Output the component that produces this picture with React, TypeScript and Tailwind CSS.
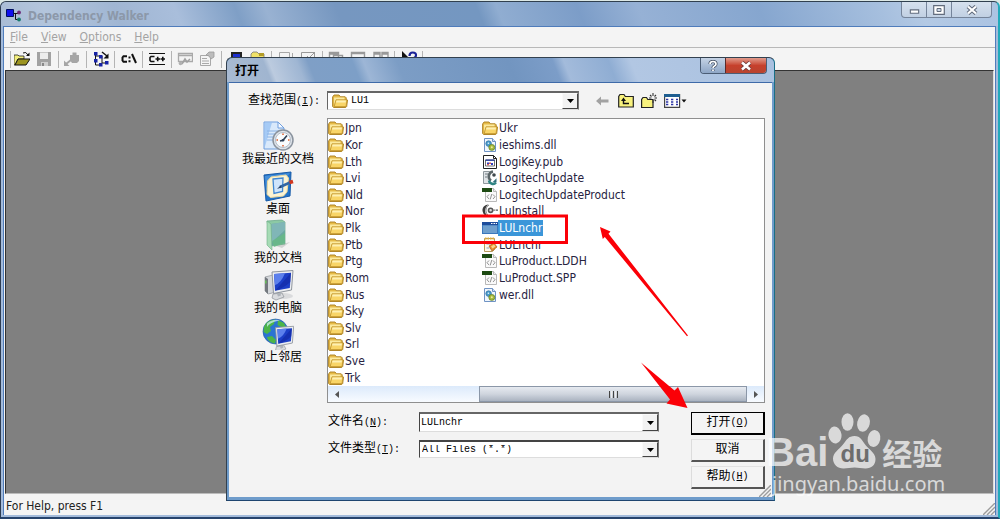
import type { ReactNode } from "react";
import clsx from "clsx";

type IconProps = { className?: string };

const folders = [
  "Jpn", "Kor", "Lth", "Lvi", "Nld", "Nor", "Plk", "Ptb",
  "Ptg", "Rom", "Rus", "Sky", "Slv", "Srl", "Sve", "Trk", "Ukr",
];

const files = [
  { name: "ieshims.dll", icon: DllIcon },
  { name: "LogiKey.pub", icon: PubIcon },
  { name: "LogitechUpdate", icon: UpdateIcon },
  { name: "LogitechUpdateProduct", icon: CodeIcon },
  { name: "LuInstall", icon: InstallIcon },
  { name: "LULnchr", icon: AppIcon, selected: true },
  { name: "LULnchr", icon: ScriptIcon },
  { name: "LuProduct.LDDH", icon: CodeIcon },
  { name: "LuProduct.SPP", icon: CodeIcon },
  { name: "wer.dll", icon: DllIcon },
];

const places = [
  { name: "我最近的文档", icon: RecentIcon },
  { name: "桌面", icon: DesktopIcon },
  { name: "我的文档", icon: DocumentsIcon },
  { name: "我的电脑", icon: ComputerIcon },
  { name: "网上邻居", icon: NetworkIcon },
];

const menus = ["File", "View", "Options", "Help"];

const tahoma = "font-['DejaVu_Sans_Condensed','Noto_Sans',sans-serif]";
const song = "font-['Liberation_Mono','Noto_Sans_CJK_SC',monospace]";

/* ---------- file icons ---------- */

function FolderIcon({ className }: IconProps) {
  return (
    <svg viewBox="0 0 16 16" className={clsx("size-4 shrink-0", className)}>
      <path d="M.6 4 2 2h5l1.500 1.800h4.700l1 1V7h1.300l-.8 6.500-1 1H1.600l-1-1z" fill="#e6bb48" stroke="#a97d1d" strokeWidth=".9" />
      <path d="M2 4.500h10.500v2.300H4L2.200 12z" fill="#fbeaa0" />
      <path d="M4 6.800h11l-1 6.800H2.200z" fill="#f9d567" stroke="#b98c28" strokeWidth=".7" />
      <path d="M4.600 7.600h9.300l-.3 1.800H4z" fill="#fdf0b4" />
    </svg>
  );
}

function DllIcon() {
  return (
    <svg viewBox="0 0 16 16" className="size-4 shrink-0">
      <path d="M2.500 1.500h8l3 3v10h-11z" fill="#f0f6fd" stroke="#6f93c4" />
      <path d="M10.500 1.500v3h3" fill="#cfe0f3" stroke="#6f93c4" />
      <circle cx="6.600" cy="6.600" r="2.800" fill="#4a9ccb" stroke="#2f6f9d" strokeWidth=".7" />
      <circle cx="6.400" cy="6.300" r=".8" fill="#e9f5fb" />
      <circle cx="9.800" cy="10.400" r="3" fill="#a4b93b" stroke="#5c7d28" strokeWidth=".7" />
      <circle cx="9.800" cy="10.200" r="1" fill="#f0e99b" />
    </svg>
  );
}

function PubIcon() {
  return (
    <svg viewBox="0 0 16 16" className="size-4 shrink-0">
      <path d="M1.500 1.500h10l3 3v10h-13z" fill="#fff" stroke="#222" />
      <path d="M11.500 1.500v3h3" fill="none" stroke="#222" />
      <path d="M3.500 6h9v6h-9z" fill="#fff" stroke="#333" strokeWidth=".7" />
      <path d="M3.500 5.500h9v1.400h-9z" fill="#2b3f9c" />
      <path d="M5 8.500h2V10H5zM9 9h2v2H9z" fill="#2f3fc0" />
      <path d="M7.200 8.500h1.600V10H7.200zM5 10.300h2v1H5z" fill="#c6312e" />
    </svg>
  );
}

function UpdateIcon() {
  return (
    <svg viewBox="0 0 16 16" className="size-4 shrink-0">
      <path d="M1.500 1.500h6v12h-6z" fill="#dfe3e6" stroke="#8f989d" />
      <path d="M11 1.500A5 5 0 0 0 9 10.600" fill="none" stroke="#5c6669" strokeWidth="2.600" />
      <path d="M7 10.500a4 4 0 0 0 7 2" fill="none" stroke="#2f8583" strokeWidth="2.400" />
      <path d="M14.500 8.200v4h-4z" fill="#2f6f7b" />
      <circle cx="12" cy="5" r="1.800" fill="#3f484c" />
      <path d="M3 4h3M3 7h2" stroke="#707a80" />
    </svg>
  );
}

function CodeIcon() {
  return (
    <svg viewBox="0 0 16 16" className="size-4 shrink-0">
      <path d="M3.500 1.500h8l3 3v10h-11z" fill="#fafafa" stroke="#b9b9b9" />
      <path d="M11.500 1.500v3h3" fill="#eee" stroke="#b9b9b9" />
      <path d="M0 1h10v4H0z" fill="#1d4a12" />
      <path d="M7 7.500 5 9.700 7 12M11 7.500l2 2.200-2 2.300M9.800 7l-1.600 5.400" fill="none" stroke="#888" strokeWidth=".9" />
    </svg>
  );
}

function InstallIcon() {
  return (
    <svg viewBox="0 0 16 16" className="size-4 shrink-0">
      <path d="M6.500 1.500C2 1.800 0 5 .6 8.300c.6 3.600 3.400 5.500 6.400 5.200C3.800 12 3 9.800 3.200 7.500 3.400 5 4.500 2.800 6.500 1.500z" fill="#3c3c3c" />
      <path d="M7 2C4.500 3.500 4 5.500 4 7.500s1 4.200 3 5.500" fill="none" stroke="#888" />
      <circle cx="8.600" cy="7.300" r="2.100" fill="#ddd" stroke="#555" strokeWidth="1.600" />
      <path d="M11.500 7.200h1.300M13.600 7.200H16" stroke="#555" strokeWidth="1.300" />
    </svg>
  );
}

function AppIcon() {
  return (
    <svg viewBox="0 0 16 16" className="size-4 shrink-0">
      <path d="M0 2h16v12H0z" fill="#3b78bd" />
      <path d="M0 2h16v3H0z" fill="#1d4c9b" />
      <path d="M9 3h1.500v1H9zM11.500 3H13v1h-1.500zM13.800 3h1.200v1h-1.200z" fill="#fff" />
      <path d="M1 5.500h14V13H1z" fill="#6f9fcd" />
    </svg>
  );
}

function ScriptIcon() {
  return (
    <svg viewBox="0 0 16 16" className="size-4 shrink-0">
      <path d="M2.500 1.500h10v11l-2 2h-8z" fill="#fdf8e8" stroke="#b69a5c" />
      <path d="M3 1.500h9" stroke="#e0ad3c" strokeWidth="2" strokeDasharray="1.500 1" />
      <path d="M4.500 5h6M4.500 7h4M4.500 11h3" stroke="#8aa5c5" />
      <path d="m7 9 5-3 3 4-5 4z" fill="#e78e30" stroke="#a95f19" strokeWidth=".7" />
      <path d="m9 9.500 3-2 1.500 2-3 2z" fill="#f9d58c" />
    </svg>
  );
}

/* ---------- places bar icons ---------- */

function Monitor() {
  return (
    <>
      <path d="m11 25 9-1 2 4-8 3-4-2z" fill="#d9dbde" stroke="#8c9197" strokeWidth=".7" />
      <path d="m14 22 4-.5 1 5-3 1z" fill="#aeb3b9" />
      <path d="M10 3 31 1.500 29.500 21 11.500 24.500z" fill="#eceef1" stroke="#8f959d" />
      <path d="M12 5 29 3.800 27.800 19 13 21.800z" fill="#1c3fc7" />
      <path d="M12 5 23 4.200Q19 14 13 16z" fill="#5c80ec" />
      <path d="M29 3.800 28.300 13Q22 19 13 21.800z" fill="#1027a0" opacity=".6" />
    </>
  );
}

function RecentIcon() {
  return (
    <svg viewBox="0 0 32 32" className="size-8">
      <path d="M2 2h14l6 6v21H2z" fill="#d9e9fb" stroke="#6f9ede" />
      <path d="M2.500 2.500 10 2.500 2.500 28z" fill="#8fbcf2" opacity=".7" />
      <path d="M16 2v6h6z" fill="#f8fbff" stroke="#6f9ede" />
      <path d="M5 11h12M5 14h8M5 17h6M5 20h6" stroke="#8ab2e4" />
      <circle cx="21" cy="20" r="10" fill="#dfe4ea" stroke="#8a939e" strokeWidth="1.500" />
      <circle cx="21" cy="20" r="7.500" fill="#fafcfe" stroke="#b4bdc8" />
      <path d="M21 13.500v1.500M21 25v1.500M14.500 20H16M26 20h1.500" stroke="#e05f2d" strokeWidth="1.500" />
      <path d="m25 15.500-4 4.800-3 .7" fill="none" stroke="#2c3e54" strokeWidth="1.600" />
      <circle cx="21" cy="20.300" r="1.300" fill="#2c3e54" />
    </svg>
  );
}

function DesktopIcon() {
  return (
    <svg viewBox="0 0 32 32" className="size-8">
      <path d="m2 5 27-3-1 24-24 5z" fill="#2374c9" stroke="#185ba8" />
      <path d="m3 6 25-3-8 10L4 20z" fill="#5da2e5" opacity=".6" />
      <path d="m9 7 15-2 2.500 3-1.500 14-3.500 4-13 1.500-3.500-3L5.500 11z" fill="#fdf4d3" stroke="#e9d79d" />
      <path d="m11 9 10-1-.5 13.500L12 23.500z" fill="#cfe5fb" stroke="#4187d1" strokeWidth="1.300" />
      <path d="m18 17 10-4.500" stroke="#3167a5" strokeWidth="2.600" />
      <path d="m27.500 12.500 3.500-1" stroke="#d1371e" strokeWidth="3.600" />
      <path d="m15 19 3.500-3.500 1 2z" fill="#263f63" />
    </svg>
  );
}

function DocumentsIcon() {
  return (
    <svg viewBox="0 0 32 32" className="size-8">
      <path d="m14 27 14-4-8 6z" fill="#c7c9c8" opacity=".8" />
      <path d="M5 2 20 1l3 2v22L9 27z" fill="#8cc9a5" stroke="#63a382" strokeWidth=".7" />
      <path d="m9 5 14-2v21L9 27z" fill="#6aa9a0" />
      <path d="m9 5 14-2v8L9 24z" fill="#86b9bd" opacity=".8" />
      <path d="M5 2 9 5l1 26-5-5z" fill="#a6dbb5" stroke="#6daf83" strokeWidth=".6" />
      <path d="m10 22 13-8v10l-11 4z" fill="#68ba84" opacity=".8" />
    </svg>
  );
}

function ComputerIcon() {
  return (
    <svg viewBox="0 0 32 32" className="size-8">
      <ellipse cx="21" cy="27" rx="10" ry="3" fill="#c9cbce" opacity=".6" />
      <path d="m3 8 8-2 3 2v15l-8 2-3-3z" fill="#d4d7db" stroke="#8c9197" strokeWidth=".7" />
      <path d="m3 8 3 2v15l-3-3z" fill="#73787e" />
      <path d="M3.800 11.500v3" stroke="#65ca52" strokeWidth="1.300" />
      <Monitor />
    </svg>
  );
}

function NetworkIcon() {
  return (
    <svg viewBox="0 0 32 32" className="size-8">
      <circle cx="13.500" cy="13.500" r="12.500" fill="#2a74d3" stroke="#1b51a1" strokeWidth=".6" />
      <path d="M2 9C4 4 8 2 13 1.500L12 6 8 9l1 4-4 3-3.500-2zM16 2l6 3 2.500 5-5-1-4-2zM5 19l5-1 4 4-1 3.500C9 25 6 23 5 19z" fill="#4cb548" />
      <path d="M5 5.500C9 1.500 15 1 18 2.500 13 3 8 5 5 9z" fill="#d9f3ff" opacity=".7" />
      <g transform="translate(5 7) scale(.86)">
        <Monitor />
      </g>
    </svg>
  );
}

/* ---------- main window toolbar icons ---------- */

function Tool({ label, children }: { label: string; children: ReactNode }) {
  return (
    <button type="button" aria-label={label} className="flex flex-[22] justify-center">
      <svg viewBox="0 0 16 16" className="size-4">{children}</svg>
    </button>
  );
}

function Sep() {
  return (
    <span className="flex flex-[6] justify-center">
      <span className="h-[17px] w-px bg-[#b4b4b4]" />
    </span>
  );
}

function Toolbar() {
  return (
    <div className="flex h-[22px] shrink-0 items-start bg-[#f4f4f4] pt-[3px] pl-1">
      <span className="h-[17px] w-[3px] border-r border-[#b4b4b4]" />
      <div className="flex w-[415px]">
        <Tool label="Open">
          <path d="M0 4h4l1 1h5v3H4l-3 6H0z" fill="#f3ef7c" stroke="#222" strokeWidth=".8" />
          <path d="M4 8h12l-4 6H1z" fill="#9c9420" stroke="#111" />
          <path d="M9 2q3-2 5 2" fill="none" stroke="#111" />
          <path d="M15.500 1.500V5H12z" fill="#111" />
        </Tool>
        <Tool label="Save">
          <path d="M1 1h14v14H1z" fill="#a2a2a2" />
          <path d="M4 1.500h8V8H4z" fill="#ededed" />
          <path d="M5 11h7v4H5z" fill="#cfcfcf" />
          <path d="M6 12h2v3H6z" fill="#888" />
        </Tool>
        <Sep />
        <Tool label="Find">
          <path d="M6 4h2.500V1.500h4V4H15v6l-2 2H8l-2-3z" fill="#a6a6a6" />
          <path d="m2 13 5-4" stroke="#a6a6a6" strokeWidth="2" />
          <path d="M0 9.500V15h5.500z" fill="#a6a6a6" />
        </Tool>
        <Sep />
        <Tool label="Auto expand">
          <path d="M2.500 1v13H9M2.500 5H7M9 5v7h3" fill="none" stroke="#111" />
          <path d="M1 1h3.500v3.500H1zM6 4h3.500v3.500H6zM1 8h3.500v3.500H1zM6 12h3.500v3.500H6zM12 10h3.500v3.500H12z" fill="#1723a5" />
          <path d="m9 1 5 4" stroke="#111" strokeWidth="1.500" />
          <path d="M15.500 2.500v5h-5z" fill="#111" />
        </Tool>
        <Sep />
        <Tool label="Full paths">
          <path d="M6 5.200H2.500L1.500 6.500v3l1 1.300H6M8.500 5.500v2M8.500 9.300v2" fill="none" stroke="#111" strokeWidth="2" />
          <path d="m11 3 4 9" stroke="#111" strokeWidth="2" />
        </Tool>
        <Sep />
        <Tool label="Undecorate C++">
          <path d="M0 2.500h16M0 13.500h16" stroke="#111" />
          <path d="M5.500 5.500H2l-1 1v3l1 1h3.500M6.500 8H11M8.700 5.800v4.500M11.500 8H16M13.800 5.800v4.500" fill="none" stroke="#111" strokeWidth="1.600" />
        </Tool>
        <Sep />
        <Tool label="Profile">
          <path d="M1.500 2.500h14v8h-14zM1 4.500h14" fill="none" stroke="#a9a9a9" strokeWidth="1.300" />
          <path d="m5 13 3-5 2 3 3-3" fill="none" stroke="#a0a0a0" strokeWidth="1.500" />
          <circle cx="3.500" cy="12.500" r="1.800" fill="#b0b0b0" />
        </Tool>
        <Tool label="Properties">
          <path d="M1.500 4.500h10v10h-10zM3 7.500h5M3 10h7M3 12.500h7" fill="none" stroke="#a9a9a9" />
          <path d="m7 4 3-3h5v5l-3 2-2-3z" fill="#bcbcbc" stroke="#999" strokeWidth=".8" />
        </Tool>
        <Sep />
        <Tool label="System information">
          <path d="M3 1h11v8H3z" fill="#222" />
          <path d="M5 3h7v5H5z" fill="#1c2fd0" />
        </Tool>
        <Tool label="Search order">
          <path d="M1 3 3 1h4l2 2h5v8H1z" fill="#f0e269" stroke="#777" strokeWidth=".8" />
          <path d="M9 2h5v3H9z" fill="#b39b26" />
        </Tool>
        <Sep />
        <Tool label="Previous">
          <path d="M1.500 1.500h10v9h-10zM14.500 2v9" fill="none" stroke="#a8a8a8" />
        </Tool>
        <Tool label="Next">
          <path d="M1.500 1.500h13v9h-13zM7 5l2 2 6-6" fill="none" stroke="#999" />
        </Tool>
        <Sep />
        <Tool label="Cascade">
          <path d="M1.500 1.500h9v6h-9zM2 3h8M5.500 4.500h9v7h-9z" fill="none" stroke="#999" strokeWidth="1.400" />
        </Tool>
        <Tool label="Tile horizontally">
          <path d="M1.500 1.500h13v9h-13zM2 2.500h12" fill="none" stroke="#999" strokeWidth="1.400" />
        </Tool>
        <Tool label="Tile vertically">
          <path d="M1 1.500h6v9H1zM9 1.500h6v9H9zM1 3h6M9 3h6" fill="none" stroke="#999" strokeWidth="1.400" />
        </Tool>
        <Sep />
        <Tool label="Context help">
          <path d="M1 0v10l6-4z" fill="#111" />
          <path d="M8.500 5q0-3.500 3.300-3.500T15 4.500q0 2-3 3" fill="none" stroke="#1b2398" strokeWidth="2.200" />
        </Tool>
        <Sep />
      </div>
    </div>
  );
}

/* ---------- shared controls ---------- */

function ArrowBox() {
  return (
    <span className="flex w-4 shrink-0 items-center justify-center border border-t-[#fafafa] border-r-[#444] border-b-[#444] border-l-[#fafafa] bg-[#f2f2f2]">
      <svg viewBox="0 0 7 4" className="h-1 w-[7px]">
        <path d="M0 0h7L3.500 4z" fill="#000" />
      </svg>
    </span>
  );
}

function Grip() {
  return (
    <svg viewBox="0 0 12 12" className="absolute right-0 bottom-0 size-3">
      <path d="M0 12 12 0M4 12l8-8M8 12l4-4" stroke="#9c9c9c" strokeWidth="1.400" />
    </svg>
  );
}

function Key({ letter }: { letter: string }) {
  return (
    <span className="text-[10px]">
      (<span className="underline">{letter}</span>)
    </span>
  );
}

function PushButton({ children, primary }: { children: ReactNode; primary?: boolean }) {
  return (
    <button
      type="button"
      className={clsx(
        "flex h-[23px] items-center justify-center text-xs leading-none text-black",
        primary
          ? "border-t border-r-2 border-b-2 border-l border-black bg-[#f4f4f4]"
          : "border border-t-[#e2e2e2] border-r-2 border-r-[#555] border-b-2 border-b-[#555] border-l-[#dcdcdc] bg-[#f4f4f4]",
      )}
    >
      {children}
    </button>
  );
}

/* ---------- open dialog ---------- */

function FileList() {
  return (
    <div className="mr-[7px] min-w-0 flex-1 border border-[#8f8f8f] bg-white pt-px">
      <ul className={clsx("grid h-[266px] grid-flow-col grid-cols-[154px_1fr] grid-rows-16 text-xs leading-4 text-[#27233f]", tahoma)}>
        {folders.map((name) => (
          <li key={name} className="flex items-center">
            <FolderIcon />
            <span className="pl-px">{name}</span>
          </li>
        ))}
        {files.map((f, i) => (
          <li key={i} className="flex items-center">
            <f.icon />
            <span className={clsx("px-px", f.selected && "bg-[#3b96d9] text-white")}>{f.name}</span>
          </li>
        ))}
      </ul>
      <div className="flex h-4 items-stretch bg-linear-to-b from-[#dceafb] to-[#f8fbff]">
        <button type="button" aria-label="Scroll left" className="flex w-[17px] items-center justify-center">
          <svg viewBox="0 0 4 7" className="h-[7px] w-1"><path d="M4 0v7L0 3.500z" fill="#555" /></svg>
        </button>
        <div className="flex flex-1 justify-end">
          <span className="flex w-[268px] items-center justify-center gap-px border border-[#8b97a8] bg-linear-to-b from-[#e6eaf0] via-[#cfd5de] to-[#aab3c0]">
            <span className="h-[7px] w-px bg-[#444]" />
            <span className="h-[7px] w-px bg-[#eee]" />
            <span className="h-[7px] w-px bg-[#444]" />
            <span className="h-[7px] w-px bg-[#eee]" />
            <span className="h-[7px] w-px bg-[#444]" />
          </span>
        </div>
        <button type="button" aria-label="Scroll right" className="flex w-[17px] items-center justify-center">
          <svg viewBox="0 0 4 7" className="h-[7px] w-1"><path d="M0 0v7l4-3.500z" fill="#555" /></svg>
        </button>
      </div>
    </div>
  );
}

function OpenDialog() {
  return (
    <section
      role="dialog"
      aria-label="打开"
      className={clsx(
        "absolute top-[57px] left-[226px] w-[549px] rounded-t-md border border-t-[#33414f] border-r-[#1a6f86] border-b-[#1f4570] border-l-[#33414f] bg-[#6f9ccb] text-black",
        song,
      )}
    >
      <header className="flex h-6 items-start justify-between rounded-t-md bg-[linear-gradient(68deg,#a9bbd2_0%,#a0b5d0_8%,#bccbdf_9%,#9fb6d3_14%,#7f9fc6_16%,#7d9fc7_24%,#9db6d6_26%,#7c9dc5_32%,#7295c0_52%,#7c9dc8_60%,#a3bbdb_62%,#8fadd3_70%,#b2c7e3_74%,#a9c1e0_100%)] pr-[7px] pl-2">
        <h2 className="pt-2 text-xs leading-none font-bold">打开</h2>
        <div className="flex h-4 overflow-hidden rounded-b border border-t-0 border-[#4b5d75]">
          <button type="button" aria-label="Help" className="flex w-6 items-center justify-center bg-linear-to-b from-[#c5d3e5] to-[#8ea6c6]">
            <svg viewBox="0 0 10 12" className="h-3 w-[10px]">
              <path d="M2 4q0-2.500 3-2.500T8 4q0 1.300-1.500 2T5 8M5 9.500v1.500" fill="none" stroke="#4a5668" strokeWidth="3.200" />
              <path d="M2 4q0-2.500 3-2.500T8 4q0 1.300-1.500 2T5 8M5 9.500v1.500" fill="none" stroke="#fff" strokeWidth="1.700" />
            </svg>
          </button>
          <button type="button" aria-label="Close" className="flex w-[41px] items-center justify-center border-l border-[#5a2a2a] bg-linear-to-b from-[#e09a8c] via-[#c6402c] to-[#b8442f]">
            <svg viewBox="0 0 12 10" className="h-[10px] w-3">
              <path d="m2 1.500 8 7M10 1.500l-8 7" stroke="#6b3a3a" strokeWidth="4.200" />
              <path d="m2 1.500 8 7M10 1.500l-8 7" stroke="#fff" strokeWidth="2.600" />
            </svg>
          </button>
        </div>
      </header>

      <div className="mx-[2px] mb-[3px] border-t border-[#3e6aa8] bg-[#f3f3f3] pt-2 pb-2">
        <div className="flex h-[19px] items-center">
          <label htmlFor="look-in" className="w-[98px] pl-[19px] text-xs leading-none">
            查找范围<Key letter="I" /><span className="text-[10px]">:</span>
          </label>
          <div className="flex h-[19px] w-[252px] border border-t-2 border-t-[#666] border-r-[#777] border-b-[#ddd] border-l-[#666] bg-white">
            <FolderIcon className="ml-1" />
            <select id="look-in" className="min-w-0 flex-1 appearance-none pl-[3px] text-[10px] leading-none">
              <option>LU1</option>
            </select>
            <ArrowBox />
          </div>
          <div className="ml-4 flex items-center gap-[7px]">
            <button type="button" aria-label="Back">
              <svg viewBox="0 0 16 16" className="size-4"><path d="m1 8 5-4.500v3h7.500v3H6v3z" fill="#a2a2a2" /></svg>
            </button>
            <button type="button" aria-label="Up one level">
              <svg viewBox="0 0 16 16" className="size-4">
                <path d="M.700 14V3.500l1.300-2h4l1.300 2h8V14z" fill="#f8f27e" stroke="#222" strokeWidth="1.200" />
                <path d="M5.500 7v3.500H11" fill="none" stroke="#111" strokeWidth="1.400" />
                <path d="M3 8l2.500-3.500L8 8z" fill="#111" />
              </svg>
            </button>
            <button type="button" aria-label="New folder">
              <svg viewBox="0 0 16 16" className="size-4">
                <path d="M.600 14.500V6.500L2 4.500h3.500l1.300 2H12v8z" fill="#f8f27e" stroke="#222" strokeWidth="1.200" />
                <path d="M12 0v3M12 7v3M8 5h2.500M13.500 5H16M9 2l1.500 1.500M15 2l-1.500 1.500M15 8l-1.500-1.500" stroke="#333" strokeWidth="1.100" />
              </svg>
            </button>
            <button type="button" aria-label="View menu" className="flex items-center">
              <svg viewBox="0 0 24 16" className="h-4 w-6">
                <path d="M.600 1.600h15v12.800h-15z" fill="#fff" stroke="#444" strokeWidth="1.200" />
                <path d="M0 1h16v3H0z" fill="#1f5f91" />
                <path d="M2 6.500h3M2 9h3M2 11.500h3M7 6.500h3M7 9h3M7 11.500h3M12 6.500h2M12 9h2M12 11.500h2" stroke="#2d35a5" strokeWidth="1.300" strokeDasharray="2 .7" />
                <path d="M17.500 6.500h5l-2.500 3z" fill="#111" />
              </svg>
            </button>
          </div>
        </div>

        <div className="mt-2 flex">
          <nav className="grid h-[250px] w-[98px] grid-rows-5 pt-[2px]">
            {places.map((p) => (
              <button key={p.name} type="button" className="flex flex-col items-center text-xs leading-none whitespace-nowrap">
                <p.icon />
                <span className="pt-[2px]">{p.name}</span>
              </button>
            ))}
          </nav>
          <FileList />
        </div>

        <div className="mt-[9px] mr-[7px] ml-[98px] flex justify-between">
          <div className="flex w-[332px] flex-col gap-2">
            <div className="flex h-5 items-center">
              <label htmlFor="file-name" className="w-[92px] pl-px text-xs leading-none">
                文件名<Key letter="N" /><span className="text-[10px]">:</span>
              </label>
              <div className="flex h-5 flex-1 border border-t-2 border-t-[#666] border-r-[#777] border-b-[#ddd] border-l-[#444] bg-white">
                <input id="file-name" defaultValue="LULnchr" className="min-w-0 flex-1 pl-px text-[10px] leading-none" />
                <ArrowBox />
              </div>
            </div>
            <div className="flex h-[18px] items-center">
              <label htmlFor="file-type" className="w-[92px] pl-px text-xs leading-none">
                文件类型<Key letter="T" /><span className="text-[10px]">:</span>
              </label>
              <div className="flex h-[18px] flex-1 border border-t-2 border-t-[#444] border-r-[#777] border-b-[#ddd] border-l-[#444] bg-white">
                <select id="file-type" className="min-w-0 flex-1 appearance-none pl-[2px] text-[10px] leading-none">
                  <option>All Files (*.*)</option>
                </select>
                <ArrowBox />
              </div>
            </div>
          </div>
          <div className="flex w-[74px] flex-col gap-1">
            <PushButton primary>打开<Key letter="O" /></PushButton>
            <PushButton>取消</PushButton>
            <PushButton>帮助<Key letter="H" /></PushButton>
          </div>
        </div>
      </div>
      <div className="absolute right-[3px] bottom-[3px] size-3"><Grip /></div>
    </section>
  );
}

/* ---------- overlays ---------- */

function Annotations() {
  return (
    <svg viewBox="0 0 1000 519" className="pointer-events-none absolute top-0 left-0 h-[519px] w-[1000px]">
      <rect x="463.500" y="216" width="103" height="26.500" fill="none" stroke="#fb0007" strokeWidth="3" />
      <path d="m600 227 10.500 4.500-2 2.200L688 335.500l-1 .7L604.800 237l-2 2z" fill="#fb0007" />
      <path d="m641 362.500 33.500 28 3.500-3.500 9.500 21-21-4.500 3.500-4z" fill="#fb0007" />
    </svg>
  );
}

function Watermark() {
  return (
    <div className="pointer-events-none absolute top-[412px] left-[766px] text-white opacity-70">
      <div className="flex h-[58px] items-end leading-none font-bold">
        <span className="font-['Liberation_Sans',sans-serif] text-[40px] leading-9">Bai</span>
        <div className="relative">
          <svg viewBox="0 0 54 58" className="h-[58px] w-[54px]">
            <ellipse cx="7" cy="23" rx="6.500" ry="8.500" transform="rotate(-8 7 23)" fill="#fff" />
            <ellipse cx="19.500" cy="10" rx="6" ry="8.800" fill="#fff" />
            <ellipse cx="35.500" cy="11" rx="6.300" ry="8.800" transform="rotate(12 35.500 11)" fill="#fff" />
            <ellipse cx="46" cy="26.500" rx="6.300" ry="8.500" transform="rotate(10 46 26.500)" fill="#fff" />
            <path d="M26.500 24c6 0 8 5 11 9s10 8 10 14-4 9.500-10 9.500c-4 0-7-1-11-1s-7 1-11 1c-6 0-10.500-4-10.500-10s6-9 10-14 5.500-8.500 11.500-8.500z" fill="#fff" />
          </svg>
          <span className="absolute inset-x-0 bottom-1 text-center font-['Liberation_Sans',sans-serif] text-2xl leading-6 text-[#666]">du</span>
        </div>
        <span className="pb-1 font-['Noto_Sans_CJK_SC',sans-serif] text-3xl leading-7">经验</span>
      </div>
      <div className="pt-[2px] pl-[6px] font-['Noto_Sans',sans-serif] text-xl leading-6">jingyan.baidu.com</div>
    </div>
  );
}

export default function App() {
  return (
    <div className={clsx("relative flex h-screen w-full flex-col overflow-hidden bg-[#dce8e6] pt-px", tahoma)}>
      <div className="flex min-h-0 flex-1 flex-col rounded-t-md border border-t-[#30404f] border-r-2 border-r-[#22aabb] border-b-2 border-b-[#26436c] border-l-[#2d3c52] bg-[#a3bbdb]">
        <header className="flex h-6 shrink-0 items-start justify-between rounded-t-md bg-[linear-gradient(68deg,#a9bcd5_0%,#b3c5dc_5%,#a0b6d3_12%,#a9bedb_18%,#7f9fc6_24%,#99b2d2_27%,#7697c0_34%,#7497c1_48%,#90add1_50%,#7c9dc8_58%,#96b1d5_64%,#86a6cf_76%,#a6bfde_88%,#b3c9e4_92%,#abc3e2_100%)] pr-[6px]">
          <h1 className="flex items-center gap-[6px] pt-[6px] pl-[5px] text-xs leading-4 font-bold text-[#8c98a9]">
            <svg viewBox="0 0 16 16" className="size-4">
              <path d="M7 5.500h5M9.500 5.500v6H12" fill="none" stroke="#111" />
              <path d="M.500 1.500h7v7h-7z" fill="#1010ee" stroke="#001060" />
              <circle cx="13" cy="4.500" r="1.900" fill="#6d2a78" />
              <circle cx="13" cy="11.500" r="1.900" fill="#177a6c" />
            </svg>
            Dependency Walker
          </h1>
          <div className="flex h-4 rounded-b border border-t-0 border-[#75849a] bg-linear-to-b from-[#d6e1ee] to-[#c1d0e3]">
            <button type="button" aria-label="Minimize" className="flex w-6 items-end justify-center pb-[3px]">
              <svg viewBox="0 0 12 6" className="h-[5px] w-[11px]"><path d="M1 1h10v4H1z" fill="#fff" stroke="#626c7d" strokeWidth="1.300" /></svg>
            </button>
            <button type="button" aria-label="Maximize" className="flex w-[25px] items-center justify-center border-l border-[#75849a]">
              <svg viewBox="0 0 12 10" className="h-[10px] w-3">
                <path d="M.700.700h10.600v8.600H.700z" fill="#fff" stroke="#626c7d" strokeWidth="1.200" />
                <path d="M4 3.500h4v3H4z" fill="#cbd7e6" stroke="#626c7d" />
              </svg>
            </button>
            <button type="button" aria-label="Close" className="flex w-[40px] items-center justify-center border-l border-[#75849a]">
              <svg viewBox="0 0 12 10" className="h-[10px] w-3">
                <path d="m2 1.500 8 7M10 1.500l-8 7" stroke="#626c7d" strokeWidth="4.200" />
                <path d="m2 1.500 8 7M10 1.500l-8 7" stroke="#fff" strokeWidth="2.200" />
              </svg>
            </button>
          </div>
        </header>

        <div className="mx-[2px] mb-[2px] flex min-h-0 flex-1 flex-col border-x border-t border-[#4f7cbb] bg-[#f4f4f4]">
          <nav className="flex h-[21px] shrink-0 items-center gap-[13px] border-b border-[#b8b8b8] pl-[6px] text-xs text-[#a3a3a3]">
            {menus.map((m) => (
              <button key={m} type="button">
                <span className="underline">{m[0]}</span>
                {m.slice(1)}
              </button>
            ))}
          </nav>
          <Toolbar />
          <main className="mr-px ml-px flex-1 border border-t-[#333] border-r-[#ddd] border-b-[#bbb] border-l-[#333] bg-[#808080]" />
          <footer className="relative h-[21px] shrink-0 pt-1 pl-[2px] text-xs leading-4 text-[#222]">
            For Help, press F1
            <Grip />
          </footer>
        </div>
      </div>

      <OpenDialog />
      <Annotations />
      <Watermark />
    </div>
  );
}
